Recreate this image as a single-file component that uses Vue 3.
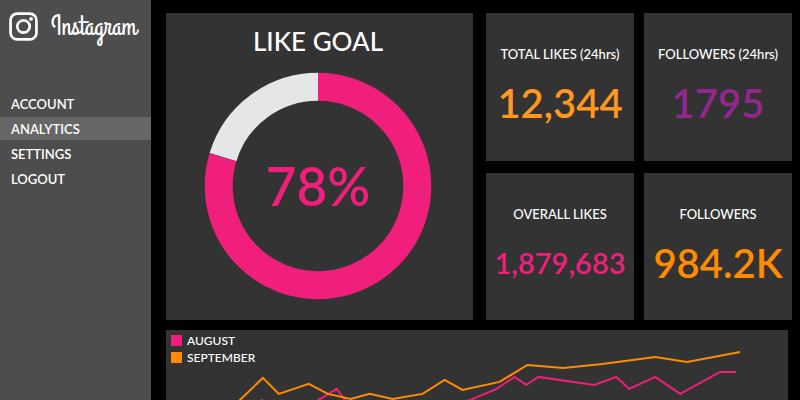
<script setup>
const navItems = ['ACCOUNT', 'ANALYTICS', 'SETTINGS', 'LOGOUT']
const activeItem = 'ANALYTICS'

const stats = [
  { label: 'TOTAL LIKES (24hrs)', value: '12,344', tone: 'amber' },
  { label: 'FOLLOWERS (24hrs)', value: '1795', tone: 'purple' },
  { label: 'OVERALL LIKES', value: '1,879,683', tone: 'pink' },
  { label: 'FOLLOWERS', value: '984.2K', tone: 'orange' },
]

const series = [
  {
    name: 'AUGUST',
    tone: 'pink',
    points: [
      [90, 74], [96, 70], [102, 74], [148, 73], [171, 59], [182, 74], [290, 74], [305, 70],
      [331, 59], [349, 47], [361, 55], [373, 47], [429, 55], [451, 47], [464, 59],
      [490, 47], [515, 64], [555, 42], [571, 42],
    ],
  },
  {
    name: 'SEPTEMBER',
    tone: 'orange',
    points: [
      [70, 74], [97, 48], [113, 64], [143, 54], [162, 64], [185, 69], [204, 64], [227, 69],
      [257, 64], [279, 50], [297, 60], [334, 52], [362, 35], [398, 38], [437, 34],
      [490, 27], [522, 32], [575, 22],
    ],
  },
]

const toPoints = (points) => points.map((p) => p.join(',')).join(' ')
</script>

<template>
  <div class="dashboard">
    <aside class="sidebar">
      <a class="brand" href="#">
        <svg class="brand-icon" viewBox="0 0 28 28" aria-hidden="true">
          <rect x="1.5" y="1.5" width="25" height="25" rx="6.5" />
          <circle cx="14" cy="14" r="6" />
          <circle class="dot" cx="21.3" cy="6.7" r="1.8" />
        </svg>
        <span class="brand-name">Instagram</span>
      </a>
      <nav class="nav">
        <a
          v-for="item in navItems"
          :key="item"
          href="#"
          class="nav-link"
          :class="{ active: item === activeItem }"
        >{{ item }}</a>
      </nav>
    </aside>

    <main class="content">
      <div class="top">
        <section class="card goal">
          <h1 class="goal-title">LIKE GOAL</h1>
          <div class="ring">
            <svg class="ring-svg" viewBox="0 0 228 228" aria-hidden="true">
              <circle
                class="rest"
                cx="114"
                cy="114"
                r="99.3"
                pathLength="1000"
                stroke-dasharray="203 797"
                transform="rotate(196.92 114 114)"
              />
              <circle
                class="done"
                cx="114"
                cy="114"
                r="99.3"
                pathLength="1000"
                stroke-dasharray="797 203"
                transform="rotate(-90 114 114)"
              />
            </svg>
            <span class="ring-value">78%</span>
          </div>
        </section>

        <div class="stats">
          <section v-for="(stat, i) in stats" :key="i" class="card stat">
            <h2 class="stat-label">{{ stat.label }}</h2>
            <p class="stat-value" :class="[stat.tone, { long: stat.value.length > 7 }]">{{ stat.value }}</p>
          </section>
        </div>
      </div>

      <section class="card chart">
        <svg class="lines" viewBox="0 0 623 70" aria-hidden="true">
          <polyline
            v-for="line in series"
            :key="line.name"
            :class="line.tone"
            :points="toPoints(line.points)"
          />
        </svg>
        <ul class="legend">
          <li v-for="line in series" :key="line.name">
            <i class="swatch" :class="line.tone"></i>{{ line.name }}
          </li>
        </ul>
      </section>
    </main>
  </div>
</template>

<style>
body {
  background: #000;
}
</style>

<style scoped>
.dashboard {
  display: flex;
  min-height: 100vh;
  color: #fff;
  font-family: Futura, "Futura PT", Lato, sans-serif;
}
.pink { color: #ef1f7b; }
.orange { color: #ff8c00; }
.amber { color: #ff981d; }
.purple { color: #93278f; }

.sidebar {
  flex: none;
  width: 151px;
  background: #4d4d4d;
}
.brand {
  display: flex;
  align-items: center;
  gap: 13px;
  padding: 12px 0 0 9px;
  color: #fff;
  text-decoration: none;
}
.brand-icon {
  width: 29px;
  height: 29px;
  fill: none;
  stroke: #fff;
  stroke-width: 2.6;
}
.brand-icon .dot {
  fill: #fff;
  stroke: none;
}
.brand-name {
  font: 27px/29px "Grand Hotel", "Liberation Serif", serif;
}
.nav {
  display: flex;
  flex-direction: column;
  gap: 2px;
  padding-top: 51px;
}
.nav-link {
  padding: 1px 0 0 11px;
  font-size: 13px;
  font-weight: 600;
  line-height: 22px;
  color: #fff;
  text-decoration: none;
}
.nav-link.active {
  background: #666;
}

.content {
  flex: 1;
  min-width: 0;
  display: flex;
  flex-direction: column;
  gap: 10px;
  padding: 13px 8px 0 15px;
}
.card {
  background: #333;
}
.top {
  display: grid;
  grid-template-columns: 307fr 306fr;
  gap: 13px;
}
.goal {
  display: flex;
  flex-direction: column;
  align-items: center;
  padding: 0 3px 20px 0;
}
.goal-title {
  margin: 0;
  padding: 12px 0 15px;
  font-size: 26px;
  font-weight: 500;
  line-height: 32px;
}
.ring {
  display: grid;
  place-items: center;
}
.ring > * {
  grid-area: 1 / 1;
}
.ring-svg {
  width: 228px;
  fill: none;
  stroke-width: 28;
}
.rest { stroke: #e6e6e6; }
.done { stroke: #ef1f7b; }
.ring-value {
  font-size: 53px;
  font-weight: 600;
  line-height: 60px;
  color: #ef1f7b;
}

.stats {
  display: grid;
  grid-template-columns: 1fr 1fr;
  grid-template-rows: 1fr 1fr;
  gap: 12px 10px;
}
.stat {
  padding-top: 31px;
  text-align: center;
  white-space: nowrap;
}
.stat-label {
  margin: 0;
  font-size: 13px;
  font-weight: 500;
  line-height: 20px;
}
.stat-value {
  margin: 15px 0 0;
  font-size: 40px;
  font-weight: 600;
  line-height: 48px;
}
.stat-value.long {
  font-size: 29px;
}

.chart {
  display: grid;
  margin-right: 4px;
}
.chart > * {
  grid-area: 1 / 1;
}
.lines {
  display: block;
  width: 100%;
  overflow: hidden;
  fill: none;
  stroke-width: 2;
}
.lines polyline {
  stroke: currentColor;
}
.legend {
  margin: 0;
  padding: 2px 0 0 5px;
  list-style: none;
  font-size: 12px;
  font-weight: 500;
  line-height: 17px;
}
.legend li {
  display: flex;
  align-items: center;
  gap: 5px;
}
.swatch {
  width: 11px;
  height: 11px;
  background: currentColor;
}
</style>
